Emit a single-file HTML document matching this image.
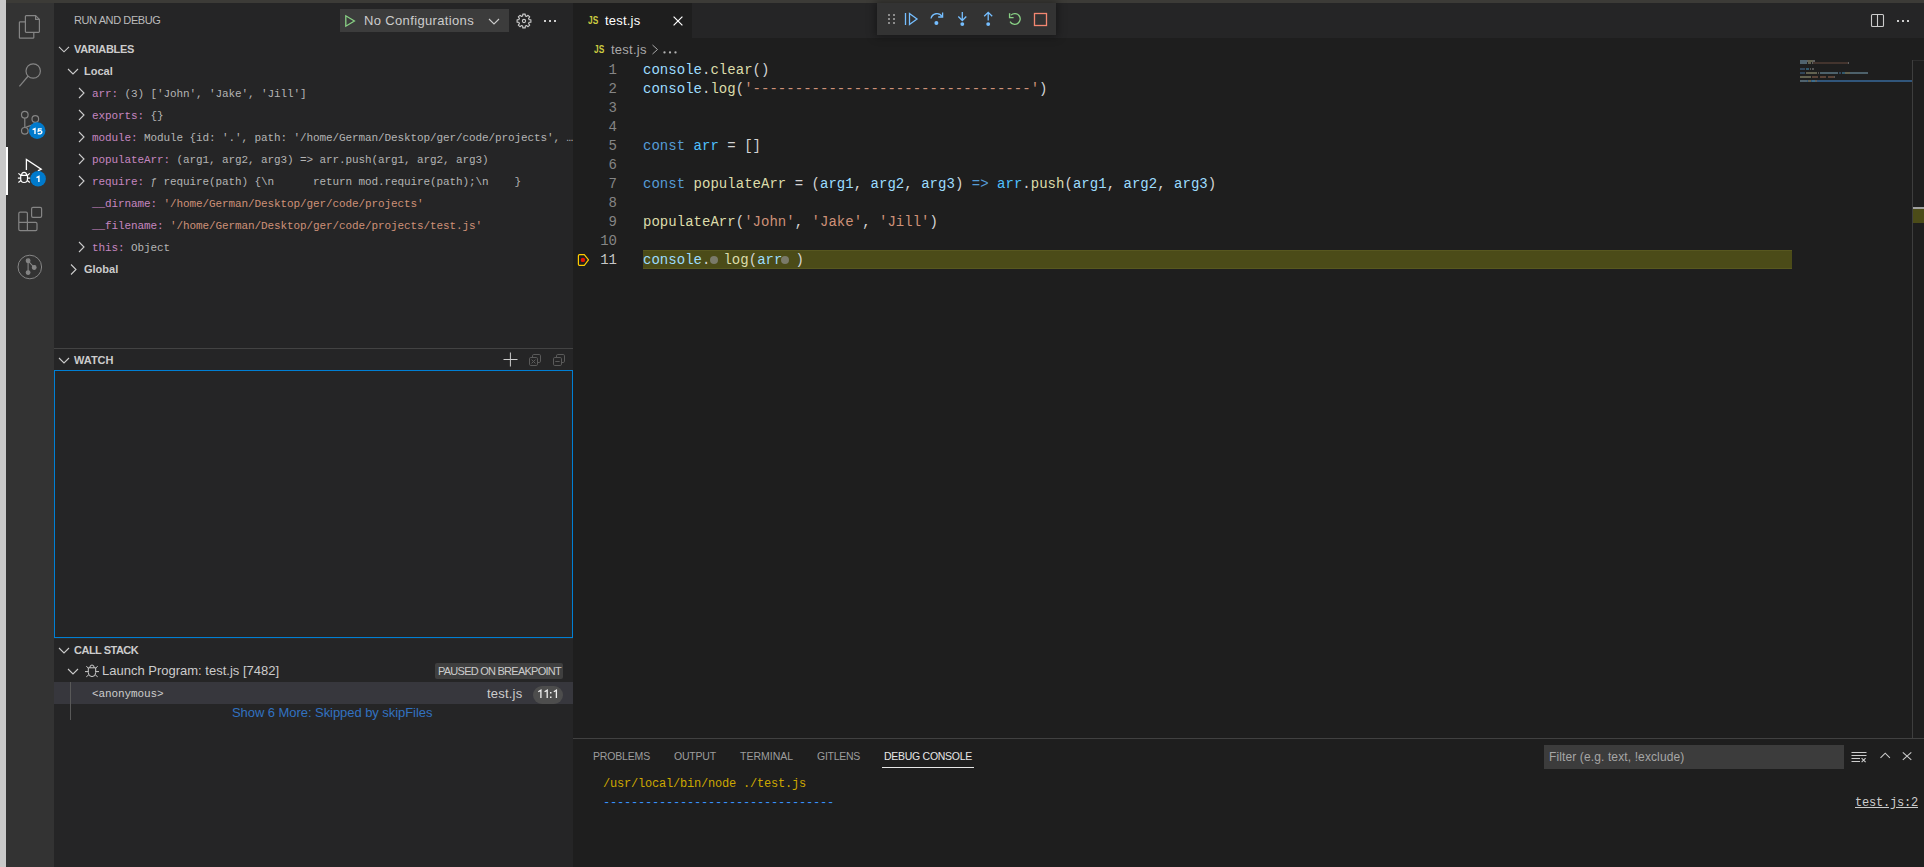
<!DOCTYPE html>
<html><head><meta charset="utf-8">
<style>
*{box-sizing:border-box;margin:0;padding:0}
html,body{width:1924px;height:867px;overflow:hidden;background:#1e1e1e;font-family:"Liberation Sans",sans-serif;}
body{position:relative}
.a{position:absolute}
.mono{font-family:"Liberation Mono",monospace}
.t{white-space:pre;position:absolute}
svg{position:absolute;overflow:visible}
#lstrip{left:0;top:0;width:6px;height:867px;background:#c9c9c9}
#topbar{left:6px;top:0;width:1918px;height:3px;background:#3c3b37}
#act{left:6px;top:3px;width:48px;height:864px;background:#333333}
#side{left:54px;top:3px;width:519px;height:864px;background:#252526}
#tabs{left:573px;top:3px;width:1351px;height:35px;background:#252526}
#tab1{left:573px;top:3px;width:119px;height:35px;background:#1e1e1e}
#panelb{left:573px;top:738px;width:1351px;height:1px;background:#414141}

/* sidebar */
.hdr{font-size:11px;font-weight:bold;color:#cccccc;line-height:22px;height:22px}
.vrow{font-family:"Liberation Mono",monospace;font-size:11px;letter-spacing:-0.1px;line-height:22px;height:22px;padding-top:1px;color:#b4b4b4}
.vn{color:#c586c0}
.vs{color:#ce9178}
/* editor */
.code{font-family:"Liberation Mono",monospace;font-size:14px;letter-spacing:0.025px;line-height:19px;height:19px;padding-top:1px;color:#d4d4d4;left:643px}
.ln{font-family:"Liberation Mono",monospace;font-size:14px;line-height:19px;height:19px;padding-top:1px;color:#858585;text-align:right;width:40px;left:577px}
.k{color:#569cd6}.c{color:#4fc1ff}.f{color:#dcdcaa}.p{color:#9cdcfe}.s{color:#ce9178}
.ptab{font-size:10.5px;line-height:16px;color:#9d9d9d;top:748px}
</style></head><body>
<div id="lstrip" class="a"></div>
<div id="topbar" class="a"></div>
<div id="act" class="a"></div>
<div id="side" class="a"></div>
<div id="tabs" class="a"></div>
<div id="tab1" class="a"></div>
<div id="panelb" class="a"></div>

<!-- ============ ACTIVITY BAR ============ -->
<div class="a" style="left:6px;top:147px;width:2px;height:48px;background:#ffffff"></div>
<!-- explorer -->
<svg style="left:0;top:0" width="54" height="300" viewBox="0 0 54 300">
 <g fill="none" stroke="#858585" stroke-width="1.2" stroke-linejoin="round">
  <path d="M25.8 21.8 H20.2 a0.8 0.8 0 0 0 -0.8 0.8 V37.4 a0.8 0.8 0 0 0 0.8 0.8 H33 a0.8 0.8 0 0 0 0.8 -0.8 V32.4"/>
  <path d="M26.2 15.6 H35.6 L39.4 19.4 V31.6 a0.8 0.8 0 0 1 -0.8 0.8 H26.2 a0.8 0.8 0 0 1 -0.8 -0.8 V16.4 a0.8 0.8 0 0 1 0.8 -0.8 Z"/>
  <path d="M35.6 15.6 V19.4 H39.4"/>
 </g>
 <!-- search -->
 <g fill="none" stroke="#858585" stroke-width="1.2">
  <circle cx="33.2" cy="71" r="7.2"/>
  <path d="M28.2 76 L19.4 86.4"/>
 </g>
 <!-- scm -->
 <g fill="none" stroke="#858585" stroke-width="1.2">
  <circle cx="24.8" cy="114.7" r="3.3"/>
  <circle cx="35.3" cy="119" r="3.3"/>
  <circle cx="24.8" cy="130.8" r="3.3"/>
  <path d="M24.8 118 V127.5 M35.3 122.3 C35.3 126 29 125 25.5 127.6"/>
 </g>
 <circle cx="37.15" cy="130.6" r="8.3" fill="#007acc"/>
 <path d="M32.6 129.6 L35 128.5 V133.9 M41.8 128.9 H38.5 L38.2 131.1 C39.5 130.3 41.9 130.4 41.9 132.1 C41.9 134 39.2 134.2 37.8 133.3" fill="none" stroke="#ffffff" stroke-width="1.4"/>
 <!-- debug -->
 <g fill="none" stroke="#ffffff" stroke-width="1.3" stroke-linejoin="miter">
  <path d="M26.4 169.9 V159.5 L41.2 169.1 L37.9 170.8"/>
 </g>
 <g fill="none" stroke="#ffffff" stroke-width="1.2">
  <path d="M20.7 175.4 H27.5 V179 A3.4 3.5 0 0 1 20.7 179 Z"/>
  <path d="M21.6 175.4 A2.5 3 0 0 1 26.6 175.4"/>
  <path d="M18.4 173.4 L20.7 175.2 M29.8 173.4 L27.5 175.2 M17.9 178.2 H20.7 M27.5 178.2 H30.3 M18.4 182.5 L20.9 180.6 M29.8 182.5 L27.3 180.6"/>
 </g>
 <circle cx="38.1" cy="178.7" r="7.8" fill="#007acc"/>
 <path d="M36.5 177.7 L38.9 176.5 V182" fill="none" stroke="#ffffff" stroke-width="1.4"/>
 <!-- extensions -->
 <g fill="none" stroke="#858585" stroke-width="1.2">
  <path d="M20.2 212.2 H26 Q27.4 212.2 27.4 213.6 V222.4 H35.6 Q37 222.4 37 223.8 V229.2 Q37 230.6 35.6 230.6 H20.2 Q18.8 230.6 18.8 229.2 V213.6 Q18.8 212.2 20.2 212.2 Z M18.8 222.4 H27.4 V230.6"/>
  <rect x="31.6" y="207.4" width="10" height="10" rx="1.4"/>
 </g>
 <!-- gitlens -->
 <g fill="none" stroke="#858585" stroke-width="1">
  <circle cx="29.8" cy="267" r="11.8"/>
 </g>
 <g fill="#858585" stroke="#858585" stroke-width="1.1">
  <circle cx="28.1" cy="260.8" r="1.9"/>
  <circle cx="34.2" cy="267.5" r="1.9"/>
  <circle cx="28.1" cy="272.6" r="1.9"/>
  <path d="M28.1 260.8 V272.6 M28.1 260.8 L34.2 267.5" fill="none"/>
 </g>
</svg>

<!-- ============ SIDEBAR ============ -->
<div class="t" style="left:74px;top:12px;font-size:11px;line-height:16px;color:#bbbbbb;letter-spacing:-0.4px">RUN AND DEBUG</div>
<div class="a" style="left:340px;top:9px;width:169px;height:23px;background:#3c3c3c"></div>
<svg style="left:0;top:0" width="600" height="40">
 <path d="M345.8 15.8 V26.2 L354.4 21 Z" fill="none" stroke="#89d185" stroke-width="1.3" stroke-linejoin="miter"/>
 <path d="M489 19 L494 24 L499 19" fill="none" stroke="#cccccc" stroke-width="1.1"/>
 <g fill="none" stroke="#cccccc" stroke-width="1.1">
  <circle cx="524" cy="21" r="1.6"/>
 </g>
 <path id="gear" fill="none" stroke="#cccccc" stroke-width="1.1" stroke-linejoin="round" d="M530.90 19.80 L530.90 22.20 L529.13 22.32 L528.56 23.70 L529.73 25.03 L528.03 26.73 L526.70 25.56 L525.32 26.13 L525.20 27.90 L522.80 27.90 L522.68 26.13 L521.30 25.56 L519.97 26.73 L518.27 25.03 L519.44 23.70 L518.87 22.32 L517.10 22.20 L517.10 19.80 L518.87 19.68 L519.44 18.30 L518.27 16.97 L519.97 15.27 L521.30 16.44 L522.68 15.87 L522.80 14.10 L525.20 14.10 L525.32 15.87 L526.70 16.44 L528.03 15.27 L529.73 16.97 L528.56 18.30 L529.13 19.68 Z"/>
 <g fill="#cccccc"><rect x="544" y="20" width="2" height="2"/><rect x="549" y="20" width="2" height="2"/><rect x="554" y="20" width="2" height="2"/></g>
</svg>
<div class="t" style="left:364px;top:12px;font-size:13px;line-height:17px;color:#cccccc;letter-spacing:0.35px">No Configurations</div>

<!-- VARIABLES -->
<svg style="left:0;top:0" width="300" height="300">
 <g fill="none" stroke="#cccccc" stroke-width="1.1">
  <path d="M59 46.8 L64 51.8 L69 46.8"/>
  <path d="M68 69 L73 74 L78 69"/>
  <path d="M79 88 L84 93 L79 98 M79 110 L84 115 L79 120 M79 132 L84 137 L79 142 M79 154 L84 159 L79 164 M79 176 L84 181 L79 186 M79 242 L84 247 L79 252"/>
  <path d="M71 264.5 L76 269.5 L71 274.5"/>
 </g>
</svg>
<div class="t hdr" style="left:74px;top:38px;letter-spacing:-0.3px">VARIABLES</div>
<div class="t hdr" style="left:84px;top:60px">Local</div>
<div class="t vrow" style="left:92px;top:82px"><span class="vn">arr:</span> (3) ['John', 'Jake', 'Jill']</div>
<div class="t vrow" style="left:92px;top:104px"><span class="vn">exports:</span> {}</div>
<div class="t vrow" style="left:92px;top:126px"><span class="vn">module:</span> Module {id: '.', path: '/home/German/Desktop/ger/code/projects', …</div>
<div class="t vrow" style="left:92px;top:148px"><span class="vn">populateArr:</span> (arg1, arg2, arg3) =&gt; arr.push(arg1, arg2, arg3)</div>
<div class="t vrow" style="left:92px;top:170px"><span class="vn">require:</span> ƒ require(path) {\n      return mod.require(path);\n    }</div>
<div class="t vrow" style="left:92px;top:192px"><span class="vn">__dirname:</span> <span class="vs">'/home/German/Desktop/ger/code/projects'</span></div>
<div class="t vrow" style="left:92px;top:214px"><span class="vn">__filename:</span> <span class="vs">'/home/German/Desktop/ger/code/projects/test.js'</span></div>
<div class="t vrow" style="left:92px;top:236px"><span class="vn">this:</span> Object</div>
<div class="t hdr" style="left:84px;top:258px">Global</div>

<!-- WATCH -->
<div class="a" style="left:54px;top:348px;width:519px;height:1px;background:#434343"></div>
<svg style="left:0;top:0" width="600" height="400">
 <path d="M59 358 L64 363 L69 358" fill="none" stroke="#cccccc" stroke-width="1.1"/>
 <path d="M510.4 352.5 V366.5 M503.5 359.5 H517.5" fill="none" stroke="#cccccc" stroke-width="1"/>
 <g fill="none" stroke="#5a5a5a" stroke-width="1">
  <path d="M532.5 357 V355.8 a1.3 1.3 0 0 1 1.3 -1.3 H539.2 a1.3 1.3 0 0 1 1.3 1.3 V361.2 a1.3 1.3 0 0 1 -1.3 1.3 H538"/>
  <rect x="529.5" y="357.5" width="8" height="8" rx="1.3"/>
  <path d="M531.6 359.6 L535.4 363.4 M535.4 359.6 L531.6 363.4"/>
  <path d="M556.5 357 V355.8 a1.3 1.3 0 0 1 1.3 -1.3 H563.2 a1.3 1.3 0 0 1 1.3 1.3 V361.2 a1.3 1.3 0 0 1 -1.3 1.3 H562"/>
  <rect x="553.5" y="357.5" width="8" height="8" rx="1.3"/>
  <path d="M555.3 361.5 H559.7"/>
 </g>
</svg>
<div class="t hdr" style="left:74px;top:349px">WATCH</div>
<div class="a" style="left:54px;top:370px;width:519px;height:268px;border:1px solid #007fd4"></div>
<div class="a" style="left:54px;top:638px;width:519px;height:1px;background:#2c2c2c"></div>

<!-- CALL STACK -->
<svg style="left:0;top:0" width="600" height="760">
 <g fill="none" stroke="#cccccc" stroke-width="1.1">
  <path d="M59 648 L64 653 L69 648"/>
  <path d="M68 669 L73 674 L78 669"/>
 </g>
</svg>
<div class="t hdr" style="left:74px;top:639px;letter-spacing:-0.5px">CALL STACK</div>
<svg style="left:0;top:0" width="600" height="760">
 <g fill="none" stroke="#cccccc" stroke-width="1">
  <path d="M88.3 667.8 H95.7 V672.6 A3.7 4 0 0 1 88.3 672.6 Z"/>
  <path d="M89.8 667.8 A2.2 2.8 0 0 1 94.2 667.8"/>
  <path d="M86.3 666.3 L88.3 668 M97.7 666.3 L95.7 668 M85 671.6 H88.3 M95.7 671.6 H99 M86.3 676.8 L88.6 675 M97.7 676.8 L95.4 675"/>
 </g>
</svg>
<div class="t" style="left:102px;top:662px;font-size:13px;line-height:17px;color:#cccccc">Launch Program: test.js [7482]</div>
<div class="a" style="left:435px;top:663px;width:128px;height:16px;background:#3f3f3f;border-radius:2px"></div>
<div class="t" style="left:438px;top:665px;font-size:11px;line-height:13px;color:#cccccc;letter-spacing:-0.75px">PAUSED ON BREAKPOINT</div>
<div class="a" style="left:54px;top:682px;width:519px;height:22px;background:#37373d"></div>
<div class="a" style="left:70px;top:682px;width:1px;height:38px;background:#585858"></div>
<div class="t mono" style="left:92px;top:683px;font-size:11px;line-height:22px;color:#cccccc;letter-spacing:-0.1px">&lt;anonymous&gt;</div>
<div class="t" style="left:487px;top:685px;font-size:13px;line-height:17px;color:#cccccc;letter-spacing:0.2px">test.js</div>
<div class="a" style="left:533px;top:686px;width:30px;height:18px;background:#4d4d4d;border-radius:9px"></div>
<svg style="left:0;top:0" width="600" height="720"><g fill="none" stroke="#eeeeee" stroke-width="1.3"><path d="M538.3 691.7 L540.9 690.1 V698 M544.6 691.7 L547.2 690.1 V698 M553.8 691.7 L556.4 690.1 V698"/></g><g fill="#eeeeee"><rect x="550" y="692" width="1.5" height="1.5"/><rect x="550" y="696.5" width="1.5" height="1.5"/></g></svg>
<div class="t" style="left:232px;top:704px;font-size:13px;line-height:17px;color:#3272c0;letter-spacing:-0.06px">Show 6 More: Skipped by skipFiles</div>

<!-- ============ EDITOR ============ -->
<!-- tab -->
<div class="t" style="left:587.6px;top:14.4px;font-size:11px;line-height:13px;font-weight:bold;color:#cbcb41;transform:scaleX(0.76);transform-origin:0 0">JS</div>
<div class="t" style="left:605px;top:12px;font-size:13px;line-height:17px;color:#ffffff;letter-spacing:0.2px">test.js</div>
<svg style="left:0;top:0" width="700" height="40">
 <path d="M673.6 16.6 L682.4 25.4 M682.4 16.6 L673.6 25.4" fill="none" stroke="#ffffff" stroke-width="1.2"/>
</svg>
<!-- debug toolbar -->
<div class="a" style="left:877px;top:3px;width:179px;height:32px;background:#333333;box-shadow:0 0 8px 2px rgba(0,0,0,0.36)"></div>
<svg style="left:0;top:0" width="1100" height="40">
 <g fill="#8c8c8c">
  <rect x="888" y="14" width="2" height="2"/><rect x="893" y="14" width="2" height="2"/>
  <rect x="888" y="18" width="2" height="2"/><rect x="893" y="18" width="2" height="2"/>
  <rect x="888" y="22" width="2" height="2"/><rect x="893" y="22" width="2" height="2"/>
 </g>
 <g fill="none" stroke="#75beff" stroke-width="1.3">
  <path d="M905.5 13 V25"/>
  <path d="M909.5 13.5 V24.5 L917 19 Z" stroke-linejoin="miter"/>
  <path d="M931 18.5 A6 6 0 0 1 942 16.5"/>
  <path d="M942.6 12.5 V17 H938.2"/>
  <path d="M962.3 12 V20.3 M958.3 16.5 L962.3 20.5 L966.3 16.5"/>
  <path d="M988.2 20.6 V12.6 M984.2 16.3 L988.2 12.3 L992.2 16.3"/>
 </g>
 <g fill="#75beff"><circle cx="936.4" cy="23.1" r="2"/><circle cx="962.3" cy="24.1" r="1.95"/><circle cx="988.2" cy="24.1" r="1.95"/></g>
 <g fill="none" stroke="#89d185" stroke-width="1.3">
  <path d="M1010.1 21.6 A5.4 5.4 0 1 0 1011 15.1"/>
  <path d="M1009.6 13.2 V17.6 H1013.6" stroke-width="1.4"/>
 </g>
 <rect x="1034.5" y="13.5" width="12" height="12" fill="none" stroke="#f48771" stroke-width="1.3"/>
</svg>
<!-- right tab actions -->
<svg style="left:0;top:0" width="1924" height="40">
 <g fill="none" stroke="#cccccc" stroke-width="1.1">
  <rect x="1871.5" y="14.5" width="12" height="12" rx="1"/>
  <path d="M1877.5 14.5 V26.5"/>
 </g>
 <g fill="#cccccc"><rect x="1897" y="20" width="2" height="2"/><rect x="1902" y="20" width="2" height="2"/><rect x="1907" y="20" width="2" height="2"/></g>
</svg>
<!-- breadcrumbs -->
<div class="t" style="left:593.6px;top:43.4px;font-size:11px;line-height:13px;font-weight:bold;color:#cbcb41;transform:scaleX(0.76);transform-origin:0 0">JS</div>
<div class="t" style="left:611px;top:41px;font-size:13px;line-height:17px;color:#a9a9a9;letter-spacing:0.25px">test.js</div>
<svg style="left:0;top:0" width="700" height="60">
 <path d="M652.5 45 L657.5 49.5 L652.5 54" fill="none" stroke="#a9a9a9" stroke-width="1"/>
 <g fill="#b4b4b4"><circle cx="664.5" cy="52.4" r="1.15"/><circle cx="670" cy="52.4" r="1.15"/><circle cx="675.5" cy="52.4" r="1.15"/></g>
</svg>

<!-- line 11 highlight -->
<div class="a" style="left:643px;top:250px;width:1149px;height:19px;background:#4b4b18;border-top:1px solid #57571f;border-bottom:1px solid #57571f"></div>
<!-- breakpoint -->
<svg style="left:0;top:0" width="700" height="300">
 <path d="M579.5 254.6 H584.3 L588.5 259.95 L584.3 265.3 H579.5 Q578.4 265.3 578.4 264.2 V255.7 Q578.4 254.6 579.5 254.6 Z" fill="none" stroke="#ffcc00" stroke-width="1.2" stroke-linejoin="round"/>
 <circle cx="582.9" cy="259.9" r="2.2" fill="#e51400"/>
</svg>
<!-- line numbers -->
<div class="t ln" style="top:60px">1</div>
<div class="t ln" style="top:79px">2</div>
<div class="t ln" style="top:98px">3</div>
<div class="t ln" style="top:117px">4</div>
<div class="t ln" style="top:136px">5</div>
<div class="t ln" style="top:155px">6</div>
<div class="t ln" style="top:174px">7</div>
<div class="t ln" style="top:193px">8</div>
<div class="t ln" style="top:212px">9</div>
<div class="t ln" style="top:231px">10</div>
<div class="t ln" style="top:250px;color:#c6c6c6">11</div>
<!-- code -->
<div class="t code" style="top:60px"><span class="p">console</span>.<span class="f">clear</span>()</div>
<div class="t code" style="top:79px"><span class="p">console</span>.<span class="f">log</span>(<span class="s">'---------------------------------'</span>)</div>
<div class="t code" style="top:136px"><span class="k">const</span> <span class="c">arr</span> = []</div>
<div class="t code" style="top:174px"><span class="k">const</span> <span class="f">populateArr</span> = (<span class="p">arg1</span>, <span class="p">arg2</span>, <span class="p">arg3</span>) <span class="k">=&gt;</span> <span class="c">arr</span>.<span class="f">push</span>(<span class="p">arg1</span>, <span class="p">arg2</span>, <span class="p">arg3</span>)</div>
<div class="t code" style="top:212px"><span class="f">populateArr</span>(<span class="s">'John'</span>, <span class="s">'Jake'</span>, <span class="s">'Jill'</span>)</div>
<div class="t code" style="top:250px"><span class="p">console</span>.<span style="display:inline-block;width:13px;height:18px;vertical-align:top;position:relative"><span style="position:absolute;left:0px;top:4.5px;width:8px;height:8px;border-radius:4px;background:#7a7a6a"></span></span><span class="f">log</span>(<span class="p">arr</span><span style="display:inline-block;width:13px;height:18px;vertical-align:top;position:relative"><span style="position:absolute;left:-1px;top:4.5px;width:8px;height:8px;border-radius:4px;background:#7a7a6a"></span></span>)</div>

<!-- minimap -->
<svg style="left:0;top:0" width="1924" height="300">
 <g opacity="0.62">
  <rect x="1800" y="60" width="7" height="2" fill="#6f8ea0"/><rect x="1807" y="60" width="1" height="2" fill="#8a8a8a"/><rect x="1808" y="60" width="5" height="2" fill="#8c8c70"/><rect x="1813" y="60" width="2" height="2" fill="#8a8a8a"/>
  <rect x="1800" y="62" width="7" height="2" fill="#6f8ea0"/><rect x="1808" y="62" width="3" height="2" fill="#8c8c70"/><rect x="1812" y="62" width="1" height="2" fill="#8a8a8a"/><rect x="1813" y="62" width="35" height="2" fill="#5a4238"/><rect x="1848" y="62" width="1" height="2" fill="#8a8a8a"/>
  <rect x="1800" y="68" width="5" height="2" fill="#3f5f7f"/><rect x="1806" y="68" width="3" height="2" fill="#3d7d9d"/><rect x="1810" y="68" width="1" height="2" fill="#777"/><rect x="1812" y="68" width="2" height="2" fill="#777"/>
  <rect x="1800" y="72" width="5" height="2" fill="#3f5f7f"/><rect x="1806" y="72" width="11" height="2" fill="#8c8c70"/><rect x="1818" y="72" width="1" height="2" fill="#777"/><rect x="1820" y="72" width="18" height="2" fill="#6a8a9a"/><rect x="1839" y="72" width="2" height="2" fill="#3f5f7f"/><rect x="1842" y="72" width="3" height="2" fill="#3d7d9d"/><rect x="1845" y="72" width="5" height="2" fill="#8c8c70"/><rect x="1850" y="72" width="18" height="2" fill="#6a8a9a"/>
  <rect x="1800" y="76" width="11" height="2" fill="#8c8c70"/><rect x="1812" y="76" width="6" height="2" fill="#7f5a48"/><rect x="1820" y="76" width="6" height="2" fill="#7f5a48"/><rect x="1828" y="76" width="6" height="2" fill="#7f5a48"/><rect x="1834" y="76" width="1" height="2" fill="#777"/>
  <rect x="1800" y="80" width="112" height="2" fill="#3d79b5"/><rect x="1800" y="80" width="7" height="2" fill="#6f8ea0"/><rect x="1808" y="80" width="3" height="2" fill="#8c8c70"/><rect x="1812" y="80" width="3" height="2" fill="#4fa0d0"/><rect x="1815" y="80" width="2" height="2" fill="#888"/>
 </g>
</svg>
<!-- overview ruler -->
<div class="a" style="left:1912px;top:60px;width:1px;height:678px;background:#3e3e3e"></div>
<div class="a" style="left:1913px;top:60px;width:11px;height:1px;background:#2d2d2d"></div>
<div class="a" style="left:1913px;top:207px;width:11px;height:2px;background:#a0a0a0"></div>
<div class="a" style="left:1913px;top:209px;width:11px;height:14px;background:#4b4b18"></div>

<!-- ============ PANEL ============ -->
<div class="t ptab" style="left:593px;letter-spacing:-0.17px">PROBLEMS</div>
<div class="t ptab" style="left:674px;letter-spacing:-0.2px">OUTPUT</div>
<div class="t ptab" style="left:740px;letter-spacing:0px">TERMINAL</div>
<div class="t ptab" style="left:817px;letter-spacing:-0.27px">GITLENS</div>
<div class="t ptab" style="left:884px;letter-spacing:-0.28px;color:#e7e7e7">DEBUG CONSOLE</div>
<div class="a" style="left:882px;top:767px;width:92px;height:1px;background:#e7e7e7"></div>
<div class="a" style="left:1544px;top:745px;width:300px;height:24px;background:#3c3c3c"></div>
<div class="t" style="left:1549px;top:749px;font-size:12px;line-height:16px;color:#a6a6a6;letter-spacing:0.12px">Filter (e.g. text, !exclude)</div>
<svg style="left:0;top:0" width="1924" height="867">
 <g fill="none" stroke="#cccccc" stroke-width="1">
  <path d="M1851.5 752.5 H1866.5 M1851.5 755.5 H1866.5 M1851.5 758.5 H1860 M1851.5 761.5 H1860"/>
  <path d="M1861.6 758.2 L1865.6 762.2 M1865.6 758.2 L1861.6 762.2" stroke-width="1.1"/>
  <path d="M1880.5 757.8 L1885.2 753.2 L1889.9 757.8" stroke-width="1.1"/>
  <path d="M1902.8 752.3 L1911.3 759.8 M1911.3 752.3 L1902.8 759.8" stroke-width="1.1"/>
 </g>
</svg>
<div class="t mono" style="left:603px;top:775px;font-size:12px;line-height:18px;letter-spacing:-0.2px;color:#cca700">/usr/local/bin/node ./test.js</div>
<div class="t mono" style="left:603px;top:794px;font-size:12px;line-height:18px;letter-spacing:-0.2px;color:#3794ff">---------------------------------</div>
<div class="t mono" style="left:1855px;top:794px;font-size:12px;line-height:18px;letter-spacing:-0.2px;color:#cccccc;text-decoration:underline">test.js:2</div>

</body></html>
